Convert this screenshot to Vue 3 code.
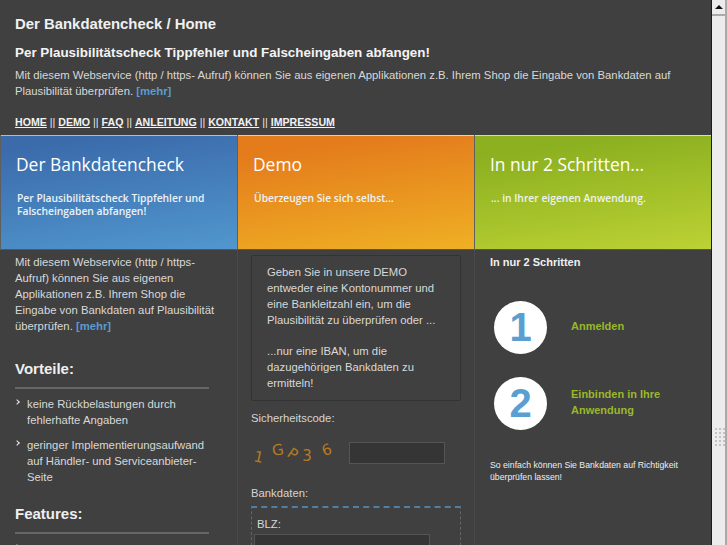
<script setup>
const nav = ['HOME', 'DEMO', 'FAQ', 'ANLEITUNG', 'KONTAKT', 'IMPRESSUM']
const heroes = [
  { cls: 'blue', title: 'Der Bankdatencheck', text: 'Per Plausibilitätscheck Tippfehler und Falscheingaben abfangen!' },
  { cls: 'orange', title: 'Demo', text: 'Überzeugen Sie sich selbst...' },
  { cls: 'green', title: 'In nur 2 Schritten...', text: '... in Ihrer eigenen Anwendung.' },
]
const captcha = ['1', 'G', 'P', '3', '6']
</script>

<template>
  <div class="page">
    <div class="main">
      <header class="top">
        <h1>Der Bankdatencheck / Home</h1>
        <h2>Per Plausibilitätscheck Tippfehler und Falscheingaben abfangen!</h2>
        <p>Mit diesem Webservice (http / https- Aufruf) können Sie aus eigenen Applikationen z.B. Ihrem Shop die Eingabe von Bankdaten auf Plausibilität überprüfen. <a class="more">[mehr]</a></p>
        <nav class="nav">
          <template v-for="(item, i) in nav" :key="item">
            <span v-if="i" class="sep">||</span>
            <a>{{ item }}</a>
          </template>
        </nav>
      </header>

      <section class="heroes">
        <div v-for="h in heroes" :key="h.cls" class="hero" :class="h.cls">
          <h3>{{ h.title }}</h3>
          <p>{{ h.text }}</p>
        </div>
      </section>

      <section class="cols">
        <div class="col left">
          <p>Mit diesem Webservice (http / https- Aufruf) können Sie aus eigenen Applikationen z.B. Ihrem Shop die Eingabe von Bankdaten auf Plausibilität überprüfen. <a class="more">[mehr]</a></p>
          <h4>Vorteile:</h4>
          <ul>
            <li>keine Rückbelastungen durch fehlerhafte Angaben</li>
            <li>geringer Implementierungsaufwand auf Händler- und Serviceanbieter-Seite</li>
          </ul>
          <h4>Features:</h4>
          <ul>
            <li>auf die Prüfung der Angaben</li>
          </ul>
        </div>

        <div class="col mid">
          <div class="box">
            <p>Geben Sie in unsere DEMO entweder eine Kontonummer und eine Bankleitzahl ein, um die Plausibilität zu überprüfen oder ...</p>
            <p>...nur eine IBAN, um die dazugehörigen Bankdaten zu ermitteln!</p>
          </div>
          <div class="label">Sicherheitscode:</div>
          <div class="code">
            <div class="captcha">
              <span v-for="c in captcha" :key="c">{{ c }}</span>
            </div>
            <input type="text" class="field short" />
          </div>
          <div class="label bank">Bankdaten:</div>
          <fieldset class="bankdata">
            <label>BLZ:</label>
            <input type="text" class="field" />
          </fieldset>
        </div>

        <div class="col right">
          <h5>In nur 2 Schritten</h5>
          <div class="step">
            <div class="num">1</div>
            <div class="step-text">Anmelden</div>
          </div>
          <div class="step two">
            <div class="num">2</div>
            <div class="step-text">Einbinden in Ihre Anwendung</div>
          </div>
          <p class="note">So einfach können Sie Bankdaten auf Richtigkeit überprüfen lassen!</p>
        </div>
      </section>
    </div>

    <aside class="scrollbar">
      <div class="sb-btn"><i></i></div>
      <div class="sb-grip">
        <b v-for="n in 15" :key="n"></b>
      </div>
    </aside>
  </div>
</template>

<style>
html, body { margin: 0; height: 100%; overflow: hidden; }
</style>

<style scoped>
.page {
  display: flex;
  width: 727px;
  height: 545px;
  overflow: hidden;
  font-family: "Liberation Sans", Arial, sans-serif;
  font-size: 11.3px;
  line-height: 16px;
  color: #d8d8d8;
  background: #404040;
}
.main {
  width: 711px;
  flex: none;
  border-right: 1px solid #1c1c1c;
}
.top {
  height: 135px;
  box-sizing: border-box;
  padding: 15px 15px 0;
}
h1 {
  margin: 0;
  font-size: 14.9px;
  line-height: 18px;
  font-weight: bold;
  color: #f0f0f0;
}
h2 {
  margin: 12px 0 0;
  font-size: 13.4px;
  line-height: 16px;
  color: #f4f4f4;
}
.top p {
  margin: 6px 0 0;
  width: 670px;
}
.more {
  color: #5a9bd0;
  font-weight: bold;
}
.nav {
  margin-top: 16px;
  font-size: 10.6px;
  line-height: 14px;
  color: #e8e8e8;
  display: flex;
  gap: 3px;
}
.nav a {
  font-weight: bold;
  color: #f2f2f2;
  text-decoration: underline;
}
.heroes {
  display: flex;
  padding-left: 1px;
  background: #5f5f5f;
}
.hero {
  width: 236px;
  height: 115px;
  box-sizing: border-box;
  padding: 16px 15px 0;
  margin-right: 1px;
  color: #fff;
  font-family: "Open Sans", sans-serif;
  border-top: 1px solid rgba(255, 255, 255, .45);
  border-bottom: 1px solid #555;
}
.hero:last-child { margin-right: 0; }
.hero h3 {
  margin: 0;
  font-size: 17.4px;
  line-height: 24px;
  font-weight: 400;
}
.hero p {
  margin: 16px 1px 0;
  font-size: 10.3px;
  line-height: 13px;
  font-weight: 600;
  color: #eef2f6;
}
.blue { background: linear-gradient(172deg, #3b6bab 10%, #5197ce 100%); }
.orange { background: linear-gradient(172deg, #e47c1c 15%, #efb024 100%); }
.green { background: linear-gradient(172deg, #8cb020 15%, #bcd234 100%); }
.cols {
  display: flex;
  height: 295px;
  padding-left: 1px;
}
.col {
  width: 237px;
  flex: none;
  box-sizing: border-box;
  overflow: hidden;
}
.left { padding: 4px 17px 0 14px; border-right: 1px solid #4a4a4a; }
.left p { margin: 0; }
h4 {
  margin: 26px 0 7px;
  padding-bottom: 9px;
  width: 194px;
  font-size: 15px;
  line-height: 18px;
  color: #efefef;
  border-bottom: 2px solid #666;
}
ul + h4 { margin-top: 20px; }
ul { margin: 0; padding: 0; list-style: none; }
li {
  position: relative;
  padding-left: 12px;
  margin-bottom: 9px;
}
li:last-child { margin-bottom: 0; }
li::before {
  content: "";
  position: absolute;
  left: 0;
  top: 4px;
  width: 3px;
  height: 3px;
  border-top: 1px solid #e8e8e8;
  border-right: 1px solid #e8e8e8;
  transform: rotate(45deg);
}
.mid { padding: 5px 13px 0; border-right: 1px solid #4a4a4a; }
.box {
  border: 1px solid #333;
  border-radius: 2px;
  padding: 8px 15px 5px;
  margin-bottom: 9px;
  height: 146px;
  box-sizing: border-box;
}
.box p { margin: 0 0 15px; }
.label { color: #d4d4d4; }
.code {
  display: flex;
  align-items: center;
  margin-top: 8px;
  height: 38px;
}
.captcha {
  width: 98px;
  flex: none;
  display: flex;
  gap: 5px;
  padding-left: 3px;
  box-sizing: border-box;
  font-family: "DejaVu Sans", sans-serif;
  font-size: 15px;
  color: #b57a22;
}
.captcha span:nth-child(1) { transform: translateY(4px) rotate(12deg); margin-right: 3px; }
.captcha span:nth-child(2) { transform: translateY(-3px) rotate(-10deg); }
.captcha span:nth-child(3) { transform: translateY(1px) rotate(35deg); }
.captcha span:nth-child(4) { transform: translateY(3px); margin-right: 5px; }
.captcha span:nth-child(5) { transform: translateY(-3px) rotate(-20deg); }
.field {
  display: block;
  box-sizing: border-box;
  width: 176px;
  height: 22px;
  background: #353535;
  border: 1px solid #555;
  padding: 0;
  margin: 0;
}
.short { width: 96px; }
.bank { margin-top: 13px; }
.bankdata {
  margin: 5px 0 0;
  padding: 8px 2px 0;
  border: 0;
  border-top: 2px dashed #4f7fa3;
  border-left: 1px dashed #666;
  border-right: 1px dashed #666;
}
.bankdata label { display: block; padding-left: 3px; margin-bottom: 2px; }
.right { padding: 4px 15px 0; }
h5 {
  margin: 0;
  font-size: 11px;
  line-height: 16px;
  color: #f0f0f0;
}
.step {
  display: flex;
  align-items: center;
  margin-top: 31px;
  padding-left: 4px;
}
.step.two { margin-top: 23px; }
.num {
  width: 53px;
  height: 53px;
  flex: none;
  border-radius: 50%;
  background: #fff;
  color: #5a9fd2;
  font-size: 40px;
  font-weight: bold;
  line-height: 53px;
  text-align: center;
}
.step-text {
  margin: 0 0 4px 24px;
  font-size: 11px;
  font-weight: bold;
  color: #9ab82a;
  line-height: 16px;
  width: 110px;
}
.note {
  margin: 29px 0 0;
  font-size: 8.7px;
  line-height: 12px;
  color: #eee;
}
.scrollbar {
  flex: 1;
  background: #ececec;
  border-right: 2px solid #aaa;
  position: relative;
}
.sb-btn {
  height: 14px;
  border-bottom: 2px solid #aaa;
  display: flex;
  align-items: center;
  justify-content: center;
}
.sb-btn i {
  width: 0;
  height: 0;
  border: 4px solid transparent;
  border-top: 0;
  border-bottom: 4px solid #111;
}
.sb-grip {
  position: absolute;
  left: 3px;
  top: 428px;
  display: grid;
  grid-template-columns: repeat(3, 2px);
  gap: 2px;
}
.sb-grip b { width: 2px; height: 2px; background: #c4c4c4; }
</style>
